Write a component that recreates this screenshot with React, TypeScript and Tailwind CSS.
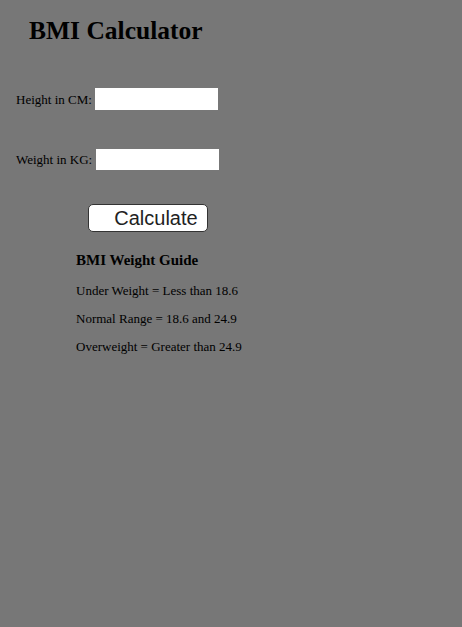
import { useState } from "react";

const App = () => {
  const [height, setHeight] = useState("");
  const [weight, setWeight] = useState("");

  return (
    <div className="min-h-[627px] w-full bg-[#777777] font-['Liberation_Serif',serif] text-black">
      <h1 className="pl-[29px] pt-[15px] text-[25.5px] font-bold leading-[32px]">BMI Calculator</h1>
      <div className="mt-[41px] flex items-center pl-[16px]">
        <label className="text-[13px] leading-none">Height in CM:</label>
        <input
          value={height}
          onChange={(e) => setHeight(e.target.value)}
          className="ml-[3px] h-[22px] w-[123px] bg-white outline-none"
        />
      </div>
      <div className="mt-[39px] flex items-center pl-[16px]">
        <label className="text-[13px] leading-none">Weight in KG:</label>
        <input
          value={weight}
          onChange={(e) => setWeight(e.target.value)}
          className="ml-[4px] h-[21px] w-[123px] bg-white outline-none"
        />
      </div>
      <div className="mt-[34px] pl-[88px]">
        <button className="h-[28px] w-[120px] rounded-[5px] border border-[#333] bg-white pl-[16px] font-['Liberation_Sans',sans-serif] text-[20px] leading-none text-[#222]">
          Calculate
        </button>
      </div>
      <div className="pl-[76px] pt-[19px]">
        <h3 className="text-[15px] font-bold leading-[18px]">BMI Weight Guide</h3>
        <p className="mt-[14px] text-[13px] leading-[16px]">Under Weight = Less than 18.6</p>
        <p className="mt-[12px] text-[13px] leading-[16px]">Normal Range = 18.6 and 24.9</p>
        <p className="mt-[12px] text-[13px] leading-[16px]">Overweight = Greater than 24.9</p>
      </div>
    </div>
  );
};

export default App;
